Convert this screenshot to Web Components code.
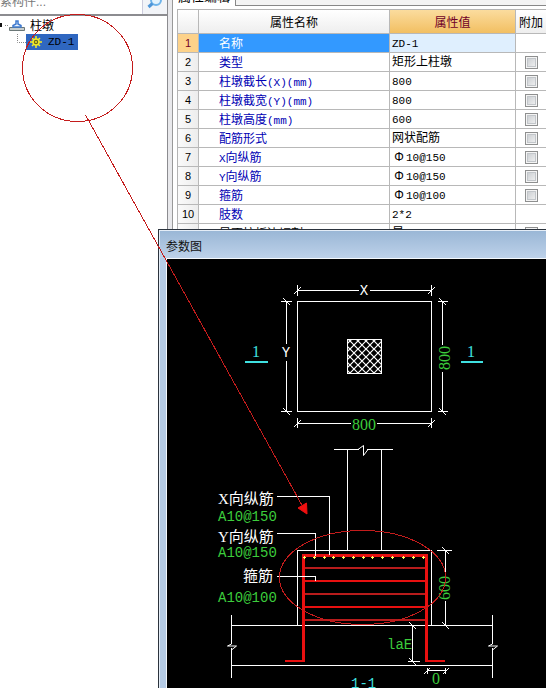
<!DOCTYPE html>
<html lang="zh-CN">
<head>
<meta charset="utf-8">
<title>参数图</title>
<style>
html,body{margin:0;height:100%;overflow:hidden;background:#fff}
body{font:12px/16px "Liberation Sans","Noto Sans CJK SC",sans-serif;color:#000}
</style>
</head>
<body>
<cad-workspace>
  <component-panel slot="side">
    <search-field slot="search"></search-field>
    <component-tree></component-tree>
  </component-panel>
  <property-panel slot="main"></property-panel>
  <dialog-window slot="window" caption="参数图"><section-drawing></section-drawing></dialog-window>
  <markup-layer slot="marks"></markup-layer>
</cad-workspace>
<script>
function define(name, html, setup) {
  const tpl = document.createElement('template');
  tpl.innerHTML = html;
  customElements.define(name, class extends HTMLElement {
    constructor() {
      super();
      this.attachShadow({mode: 'open'}).appendChild(tpl.content.cloneNode(true));
    }
    connectedCallback() { if (setup) setup(this, this.shadowRoot); }
  });
}

define('cad-workspace', `
<style>
:host{display:grid;grid-template-columns:168px 1fr;height:100vh;position:relative;overflow:hidden;background:#e9e9ec}
::slotted([slot=window]){position:absolute;left:158px;top:229px;right:0;bottom:0}
::slotted([slot=marks]){position:absolute;inset:0;pointer-events:none}
</style>
<slot name="side"></slot><slot name="main"></slot><slot name="window"></slot><slot name="marks"></slot>`);

define('component-panel', `
<style>
:host{display:flex;flex-direction:column;background:#fff;border-right:1px solid #8c8c90;overflow:hidden}
.tree{border-top:2px solid #8c8c90;flex:1}
</style>
<slot name="search"></slot><div class="tree"><slot></slot></div>`);

define('search-field', `
<style>
:host{display:flex;height:14px;background:#f2f4f8;align-items:flex-end;overflow:hidden}
input{flex:1;min-width:0;height:24px;margin:0;padding:0;border:0;border-right:1px solid #ccd;background:#fff;font:12px/24px "Liberation Sans","Noto Sans CJK SC",sans-serif;text-indent:-12px;color:#666}
input::placeholder{color:#777;opacity:1}
button{width:24px;height:24px;margin:0;padding:0;border:0;background:none;display:flex;align-items:center;justify-content:center}
</style>
<input type="text" placeholder="搜索构件..." aria-label="搜索构件">
<button aria-label="搜索"><svg width="16" height="16" viewBox="0 0 16 16" fill="none"><circle cx="9" cy="6" r="5" fill="#e4f3fd" stroke="#6fb4ea" stroke-width="2"/><path d="M5.500 9.500L1.500 13" stroke="#4f96d8" stroke-width="3"/></svg></button>`);

define('component-tree', `
<style>
:host{display:block}
ul{list-style:none;margin:0;padding:0}
.root{display:flex;align-items:center;height:18px;gap:4px}
.root span{line-height:18px;padding-top:2px}
.child{display:flex;align-items:center;height:16px;padding-left:16px}
.pick{display:flex;align-items:center;gap:6px;width:52px;height:16px;padding:0 0 0 4px;border:0;background:#2f67c0;color:#000;font:11px/16px "Liberation Mono",monospace;text-align:left}
svg{flex:none;display:block}
</style>
<ul><li><div class="root">
<svg width="26" height="16" viewBox="0 0 26 16"><path d="M0 6h2v4H0z" fill="#111"/><path d="M5 8.500h4" stroke="#888" stroke-dasharray="1 1"/><path d="M9.500 10.500h15v3h-15z" fill="#c7cdcd" stroke="#6b7777"/><path d="M13 10V8.500l3-1.500v-3h2v3l3 1.500V10z" fill="#eaf4ff" stroke="#3e79cf" stroke-width="1.500"/></svg>
<span>柱墩</span></div>
<ul><li class="child"><svg width="10" height="16" viewBox="0 0 10 16"><path d="M1.500 0v8.500H10" fill="none" stroke="#888" stroke-dasharray="1 1"/></svg>
<button class="pick"><svg width="12" height="12" viewBox="0 0 12 12"><path d="M6 0v12M0 6h12M2 2l8 8M10 2l-8 8" stroke="#f6ed24" stroke-width="1.500"/><circle cx="6" cy="6" r="3" fill="#6a6a20" stroke="#f6ed24" stroke-width="1.500"/><circle cx="6" cy="6" r="1" fill="#f6ed24"/></svg>ZD-1</button></li></ul>
</li></ul>`);

define('property-panel', `
<style>
:host{display:flex;flex-direction:column;margin-left:4px;background:#fff;border-left:1px solid #999;overflow:hidden}
.tabs{display:flex;height:6px;flex:none}
.tab{height:20px;margin:-14px 0 0;width:63px;border:0;border-right:1px solid #888;padding:0;background:#fff;color:#000;font:13px/16px "Noto Sans CJK SC",sans-serif;text-align:center}
.rest{flex:1;background:#f4f4f4;border-bottom:1px solid #888}
.sheet{margin:3px 0 0 4px;border:1px solid #b4b4b4;border-width:1px 0 0 1px}
table{border-collapse:separate;border-spacing:0;table-layout:fixed;width:100%}
th,td{box-sizing:border-box;height:19px;padding:0;border:1px solid #b8b8b8;border-width:0 1px 1px 0;line-height:16px;white-space:nowrap;overflow:hidden;font-weight:400;text-align:left}
thead th{height:24px;padding-top:2px;text-align:center;background:linear-gradient(#fff,#eee)}
thead th.on{background:linear-gradient(#fbdc9e,#f2bf62);color:#700028}
tbody th{text-align:center;font-size:11px;background:linear-gradient(90deg,#fafafa,#ededed)}
td.name{padding:2px 0 0 20px;line-height:14px;color:#0000b4}
td.val{padding-left:2px}
.lat{font:11px/10px "Liberation Mono",monospace}
.phi{display:inline-block;width:14px;text-align:center;font:12px/12px "Liberation Sans",sans-serif}
td.chk{text-align:center}
tr.sel th{background:#fdd28a;color:#700028}
tr.sel .name{background:#3399ff;color:#fff}
tr.sel .val{background:#dfeffe}
tr.cut .name{color:#000}
th:last-child,td:last-child{border-right:0}
input{appearance:none;display:block;width:13px;height:13px;margin:0 auto;border:1px solid #8e8f8f;background:linear-gradient(135deg,#c4c8cc,#f6f6f6);box-shadow:inset 0 0 0 1px #f4f4f4,inset 0 0 0 2px #c2c6ca}
</style>
<div class="tabs"><button class="tab">属性编辑</button><div class="rest"></div></div>
<div class="sheet"><table>
<colgroup><col style="width:21px"><col style="width:191px"><col><col style="width:30px"></colgroup>
<thead><tr><th></th><th>属性名称</th><th class="on">属性值</th><th>附加</th></tr></thead>
<tbody></tbody></table></div>`, (host, root) => {
  const rows = [
    ['名称', 'ZD-1', 0], ['类型', '矩形上柱墩', 1], ['柱墩截长(X)(mm)', '800', 1],
    ['柱墩截宽(Y)(mm)', '800', 1], ['柱墩高度(mm)', '600', 1], ['配筋形式', '网状配筋', 1],
    ['X向纵筋', 'Φ10@150', 1], ['Y向纵筋', 'Φ10@150', 1], ['箍筋', 'Φ10@100', 1],
    ['肢数', '2*2', 0], ['是否按板边切割', '是', 1]];
  const latin = s => s.replace(/[\x20-\x7e]+/g, m => `<span class="lat">${m}</span>`)
    .replace('Φ', '<span class="phi">Φ</span>');
  root.querySelector('tbody').innerHTML = rows.map(([n, v, c], i) =>
    `<tr class="${i === 0 ? 'sel' : i === 10 ? 'cut' : ''}"><th>${i + 1}</th><td class="name">${latin(n)}</td><td class="val">${latin(v)}</td><td class="chk">${c ? `<input type="checkbox" aria-label="附加 ${n}">` : ''}</td></tr>`).join('');
});

define('dialog-window', `
<style>
:host{display:flex;flex-direction:column;box-sizing:border-box;border:1px solid #2b333d;border-width:1px 0 0 1px;background:#b5cbe5;box-shadow:inset 1px 1px #e4edf7;padding-left:7px}
header{height:27px;flex:none;line-height:32px;margin-left:-6px;padding-left:6px;margin-top:1px;background:linear-gradient(#9ab7d6,#bdd1e9);color:#111}
.body{flex:1;min-height:0;background:#000;border:1px solid #f4f8fc;border-width:1px 0 0 1px;overflow:hidden}
</style>
<header></header><div class="body"><slot></slot></div>`,
(host, root) => { root.querySelector('header').textContent = host.getAttribute('caption'); });

define('section-drawing', `
<style>
:host{display:block}
svg{display:block}
.w{fill:none;stroke:#fff;stroke-width:1;shape-rendering:crispEdges}
.z{fill:none;stroke:#fff;stroke-width:1}
.bar{fill:none;stroke:#e81010;stroke-width:2}
.edge{stroke-width:3}
.dim{stroke:#b81c1c}
.cut{stroke:#3fe0e0;stroke-width:2}
text{font-family:"Liberation Mono","Noto Sans CJK SC",monospace;font-size:14px;fill:#fff}
.g{fill:#3ccc3c}.c{fill:#3fe0e0}.m{text-anchor:middle}
.n{font-family:"Liberation Serif",serif;font-size:16px}
.l{font-family:"Liberation Serif","Noto Sans CJK SC",serif;font-size:15px}
</style>
<svg width="379" height="429" viewBox="167 259 379 429">
<defs><pattern id="hatch" x="350" y="341" width="8" height="8" patternUnits="userSpaceOnUse"><path d="M-1-1l10 10M9-1l-10 10" stroke="#fff" stroke-width="1.200"/></pattern></defs>
<path class="w" d="M297.500 301.500H431.500V411.500H297.500zM297.500 290.500H359M370 290.500H431.500M297.500 285V296M431.500 285V296M286.500 301.500V344M286.500 361V411.500M281 301.500H292M281 411.500H292M442.500 301.500V345M442.500 372V411.500M438 301.500H448M438 411.500H448M297.500 423.500H351M377 423.500H431.500M297.500 418V428M431.500 418V428"/>
<path class="z" d="M294 294l7-7M428 294l7-7M283 298l7 7M283 408l7 7M439 298l7 7M439 408l7 7M294 427l7-7M428 427l7-7"/>
<rect x="347.500" y="339.500" width="34" height="34" fill="url(#hatch)" stroke="#fff"/>
<text class="m" x="364" y="295">X</text><text class="m" x="286" y="357">Y</text>
<text class="n m g" x="364" y="430">800</text>
<text class="n m g" transform="rotate(-90 450 358)" x="450" y="358">800</text>
<text class="n m c" x="256" y="357">1</text><text class="n m c" x="471" y="357">1</text>
<path class="cut" d="M245 362H268M461 362H483"/>

<path class="w" d="M334 449.500H359M367 449.500H393M347.500 449.500V550.500M381.500 449.500V550.500M297.500 625.500V550.500H431.500V625.500M231.500 625.500H492.500M231.500 665.500H492.500M231.500 615V642M231.500 648V678M492.500 615V642M492.500 648V678M445.500 550.500V575M445.500 601V625.500M437 550.500H452M412.500 625.500V661.500M408 661.500H420M427.500 670.500H446M427.500 668V674M445.500 668V674"/>
<path class="z" d="M358 449.500l5.500-4v10l4.500-6M231.500 641v3l-4 2h9l-5 4v-2M492.500 641v3l-4 2h9l-5 4v-2M442 547l7 7M442 622l7 7M409 622l7 7M409 658l7 7M424 674l6-6M443 674l6-6"/>
<g shape-rendering="crispEdges"><path class="bar dim" d="M303 568H427M303 594H427M303 620H427"/>
<path class="bar" d="M303 581H427M303 607H427"/>
<path class="bar edge" d="M303.500 662V555.500H426.500V662"/><path class="bar" d="M285 661H305M425 661H445"/></g>
<path d="M303 557.500h3m7 0h3m7 0h3m6 0h3m7 0h3m7 0h3m7 0h3m6 0h3m7 0h3m7 0h3m8 0h3m7 0h3m7 0h3M304.500 556v3m10-3v3m10-3v3m9-3v3m10-3v3m10-3v3m10-3v3m9-3v3m10-3v3m10-3v3m11-3v3m10-3v3m10-3v3" stroke="#ffff60" shape-rendering="crispEdges"/>
<path class="w" d="M277 496.500H329.500V555M277 533.500H315.500V556M277 576.500H315.500V581"/>
<text class="l" x="218" y="504">X向纵筋</text><text class="g" x="218" y="521">A10@150</text>
<text class="l" x="218" y="542">Y向纵筋</text><text class="g" x="218" y="557">A10@150</text>
<text class="l" x="243" y="581">箍筋</text><text class="g" x="218" y="602">A10@100</text>
<text class="n m g" transform="rotate(-90 450 588)" x="450" y="588">600</text>
<text class="g" x="387" y="649">laE</text><text class="n m g" x="436" y="684">0</text>
<text class="c" x="351" y="688">1-1</text>
</svg>`);

define('markup-layer', `
<style>:host{display:block}svg{display:block;width:100%;height:100%}</style>
<svg fill="none" stroke="#c41c1c"><g shape-rendering="crispEdges"><ellipse cx="77.500" cy="68" rx="55" ry="53.500"/><path d="M85.500 115L303 507"/><ellipse cx="362.500" cy="577.500" rx="83" ry="47"/></g><path d="M307 514L298 508L306.500 503z" fill="#f01010" stroke="#f01010"/></svg>`);
</script>
</body>
</html>
